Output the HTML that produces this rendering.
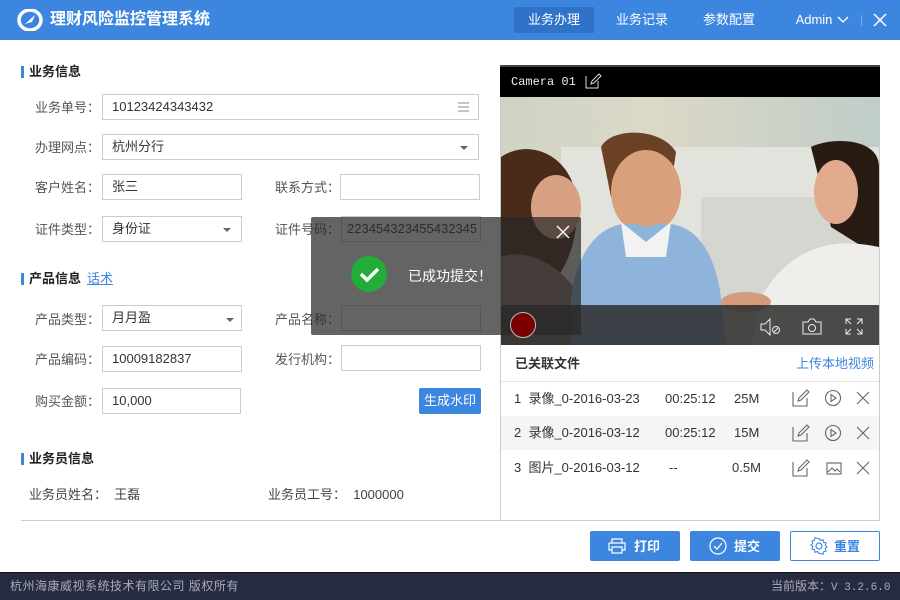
<!DOCTYPE html>
<html><head><meta charset="utf-8">
<style>
*{margin:0;padding:0;box-sizing:border-box}
body{width:900px;height:600px;overflow:hidden;background:#fff;font-family:"Liberation Sans","Noto Sans CJK SC",sans-serif;font-size:13px;line-height:16px;color:#333;position:relative}
.a{position:absolute;white-space:nowrap}
.top{left:0;top:0;width:900px;height:40px;background:#3d86e0}
.title{left:50px;top:11px;color:#fff;font-size:16px;line-height:18px;font-weight:bold}
.nav{top:7px;height:26px;line-height:26px;color:#fff;font-size:13px;text-align:center}
.sec{font-weight:bold;font-size:13px;color:#222}
.bar{width:3px;height:12px;background:#3d86e0}
.lab{color:#555;font-size:13px;text-align:right;width:82px}
.inp{border:1px solid #ccc;height:26px;line-height:24px;padding-left:9px;font-size:13px;color:#333;background:#fff}
.caret{width:0;height:0;border-left:4px solid transparent;border-right:4px solid transparent;border-top:4px solid #666}
.btn{height:30px;line-height:30px;color:#fff;background:#3d86e0;border-radius:2px;font-weight:bold;font-size:13px}
.row{left:501px;width:378px;height:34px;line-height:34px;font-size:13px;color:#333}
</style></head><body>
<div class="a top"></div>
<svg class="a" style="left:17px;top:9px" width="26" height="22" viewBox="0 0 26 22"><ellipse cx="13" cy="11" rx="11" ry="10" fill="none" stroke="#fff" stroke-width="3.5"/><path d="M8 15 L18 6 L15 13 Z" fill="#fff"/></svg>
<div class="a title">理财风险监控管理系统</div>
<div class="a nav" style="left:514px;width:80px;background:#2f72c8">业务办理</div>
<div class="a nav" style="left:602px;width:80px">业务记录</div>
<div class="a nav" style="left:689px;width:80px">参数配置</div>
<div class="a nav" style="left:790px;width:48px">Admin</div>
<svg class="a" style="left:837px;top:16px" width="12" height="8"><path d="M1 1 L6 6 L11 1" stroke="#fff" fill="none" stroke-width="1.3"/></svg>
<div class="a" style="left:861px;top:15px;width:1px;height:11px;background:#7aaae8"></div>
<svg class="a" style="left:873px;top:13px" width="14" height="14"><path d="M1 1 L13 13 M13 1 L1 13" stroke="#fff" stroke-width="1.5"/></svg>

<div class="a bar" style="left:21px;top:66px"></div>
<div class="a sec" style="left:29px;top:64px">业务信息</div>
<div class="a lab" style="left:18px;top:100px">业务单号：</div>
<div class="a inp" style="left:102px;top:94px;width:377px">10123424343432</div>
<svg class="a" style="left:458px;top:102px" width="11" height="10"><path d="M0 1h11M0 5h11M0 9h11" stroke="#888" stroke-width="1"/></svg>
<div class="a lab" style="left:18px;top:140px">办理网点：</div>
<div class="a inp" style="left:102px;top:134px;width:377px">杭州分行</div>
<div class="a caret" style="left:460px;top:146px"></div>
<div class="a lab" style="left:18px;top:180px">客户姓名：</div>
<div class="a inp" style="left:102px;top:174px;width:140px">张三</div>
<div class="a lab" style="left:258px;top:180px">联系方式：</div>
<div class="a inp" style="left:340px;top:174px;width:140px"></div>
<div class="a lab" style="left:18px;top:222px">证件类型：</div>
<div class="a inp" style="left:102px;top:216px;width:140px">身份证</div>
<div class="a caret" style="left:223px;top:228px"></div>
<div class="a lab" style="left:258px;top:222px">证件号码：</div>
<div class="a inp" style="left:341px;top:216px;width:140px;padding-left:5px">223454323455432345</div>

<div class="a bar" style="left:21px;top:273px"></div>
<div class="a sec" style="left:29px;top:271px">产品信息</div>
<div class="a" style="left:87px;top:271px;color:#3d86e0;text-decoration:underline">话术</div>
<div class="a lab" style="left:18px;top:312px">产品类型：</div>
<div class="a inp" style="left:102px;top:305px;width:140px">月月盈</div>
<div class="a caret" style="left:226px;top:318px"></div>
<div class="a lab" style="left:258px;top:312px">产品名称：</div>
<div class="a inp" style="left:341px;top:305px;width:140px"></div>
<div class="a lab" style="left:18px;top:352px">产品编码：</div>
<div class="a inp" style="left:102px;top:346px;width:140px">10009182837</div>
<div class="a lab" style="left:258px;top:352px">发行机构：</div>
<div class="a inp" style="left:341px;top:345px;width:140px"></div>
<div class="a lab" style="left:18px;top:394px">购买金额：</div>
<div class="a inp" style="left:102px;top:388px;width:139px">10,000</div>
<div class="a btn" style="left:419px;top:388px;width:62px;height:26px;line-height:26px;text-align:center;font-weight:normal">生成水印</div>

<div class="a bar" style="left:21px;top:453px"></div>
<div class="a sec" style="left:29px;top:451px">业务员信息</div>
<div class="a" style="left:29px;top:487px;color:#444">业务员姓名：&nbsp;&nbsp;王磊</div>
<div class="a" style="left:268px;top:487px;color:#444">业务员工号：&nbsp;&nbsp;1000000</div>
<div class="a" style="left:21px;top:520px;width:480px;height:1px;background:#ccc"></div>

<div class="a" style="left:500px;top:65px;width:380px;height:456px;border:1px solid #ccc"></div>
<div class="a" style="left:500px;top:65px;width:380px;height:32px;background:#000;border-top:2px solid #444"></div>
<div class="a" style="left:511px;top:74px;color:#eee;font-family:'Liberation Mono',monospace;font-size:12px">Camera 01</div>
<svg class="a" style="left:585px;top:73px" width="18" height="16"><path d="M1 3v12h12V8" stroke="#ddd" fill="none"/><path d="M6 11l1-3 7-7 2 2-7 7z" stroke="#ddd" fill="none"/></svg>
<svg class="a" style="left:501px;top:97px" width="378" height="248" viewBox="0 0 378 248">
<defs><linearGradient id="bg" x1="0" x2="1"><stop offset="0" stop-color="#cfd3c5"/><stop offset=".4" stop-color="#dcd8c6"/><stop offset="1" stop-color="#bfcdc8"/></linearGradient></defs>
<rect width="378" height="248" fill="url(#bg)"/>
<rect x="60" y="50" width="318" height="160" fill="#e2e3dc"/>
<rect x="200" y="100" width="178" height="120" fill="#d4d6d0"/>
<path d="M0 60 C30 40 70 60 75 100 C80 150 60 180 40 200 L0 210Z" fill="#4a2a18"/>
<ellipse cx="55" cy="110" rx="25" ry="32" fill="#d9a183"/>
<path d="M0 160 C30 150 60 170 80 200 L80 248 L0 248Z" fill="#8a7060"/>
<path d="M100 50 C110 30 160 30 175 55 L170 90 L110 100Z" fill="#6b4126"/>
<ellipse cx="145" cy="95" rx="35" ry="42" fill="#d9a07c"/>
<path d="M70 200 C80 130 120 120 145 130 C175 120 210 130 220 200 L225 248 L70 248Z" fill="#8eb4dc"/>
<path d="M120 125 L145 145 L170 125 L165 160 L125 160Z" fill="#f2f2f2"/>
<path d="M310 50 C330 40 378 40 378 70 L378 160 L330 130Z" fill="#2a1a14"/>
<ellipse cx="335" cy="95" rx="22" ry="32" fill="#e0ab8e"/>
<path d="M260 200 C290 150 330 140 378 150 L378 248 L250 248Z" fill="#efeeea"/>
<ellipse cx="245" cy="205" rx="25" ry="10" fill="#d49a7c"/>
<rect y="208" width="378" height="40" fill="#2d2d2d" opacity=".85"/>
</svg>
<svg class="a" style="left:759px;top:318px" width="22" height="18"><path d="M2 6h4l5-5v16l-5-5H2z" stroke="#eee" fill="none"/><circle cx="17" cy="12" r="3.5" stroke="#eee" fill="none"/><path d="M15 14l4-4" stroke="#eee"/></svg>
<svg class="a" style="left:802px;top:318px" width="20" height="17"><path d="M1 4h5l2-3h4l2 3h5v12H1z" stroke="#eee" fill="none"/><circle cx="10" cy="10" r="3.5" stroke="#eee" fill="none"/></svg>
<svg class="a" style="left:845px;top:318px" width="18" height="17"><path d="M1 6V1h5M12 1h5v5M17 11v5h-5M6 16H1v-5M1 1l5 5M17 1l-5 5M17 16l-5-5M1 16l5-5" stroke="#eee" fill="none"/></svg>

<div class="a" style="left:515px;top:356px;font-weight:bold;color:#333">已关联文件</div>
<div class="a" style="left:796px;top:356px;color:#3d86e0">上传本地视频</div>
<div class="a" style="left:501px;top:381px;width:378px;height:1px;background:#e6e6e6"></div>
<div class="a row" style="top:382px"><span class="a" style="left:13px">1&nbsp; 录像_0-2016-03-23</span><span class="a" style="left:164px">00:25:12</span><span class="a" style="left:233px">25M</span></div>
<div class="a row" style="top:416px;background:#f5f5f5"><span class="a" style="left:13px">2&nbsp; 录像_0-2016-03-12</span><span class="a" style="left:164px">00:25:12</span><span class="a" style="left:233px">15M</span></div>
<div class="a row" style="top:451px"><span class="a" style="left:13px">3&nbsp; 图片_0-2016-03-12</span><span class="a" style="left:168px">--</span><span class="a" style="left:231px">0.5M</span></div>
<svg class="a" style="left:790px;top:388px" width="90" height="100">
<g stroke="#666" fill="none" stroke-width="1.1">
<path d="M3 4v14h14V10M8 13l1-3 8-8 2 2-8 8z"/>
<circle cx="43" cy="10" r="7.5"/><path d="M41 6.5v7l5-3.5z"/>
<path d="M67 4l12 12M79 4L67 16"/>
<g transform="translate(0,35)"><path d="M3 4v14h14V10M8 13l1-3 8-8 2 2-8 8z"/><circle cx="43" cy="10" r="7.5"/><path d="M41 6.5v7l5-3.5z"/><path d="M67 4l12 12M79 4L67 16"/></g>
<g transform="translate(0,70)"><path d="M3 4v14h14V10M8 13l1-3 8-8 2 2-8 8z"/><rect x="37" y="5" width="14" height="11"/><path d="M38 14l4-4 3 3 2-2 3 3"/><path d="M67 4l12 12M79 4L67 16"/></g>
</g></svg>

<div class="a" style="left:311px;top:217px;width:270px;height:118px;background:rgba(40,40,40,.72);border-radius:2px"></div>
<svg class="a" style="left:556px;top:225px" width="14" height="14"><path d="M1 1l12 12M13 1L1 13" stroke="#fff" stroke-width="1.4"/></svg>
<div class="a" style="left:351px;top:256px;width:36px;height:36px;border-radius:50%;background:#22ac38"></div>
<svg class="a" style="left:351px;top:256px" width="36" height="36"><path d="M10 18l6 6 11-11" stroke="#fff" stroke-width="3.5" fill="none"/></svg>
<div class="a" style="left:408px;top:268px;color:#fff;font-size:14px">已成功提交！</div>
<div class="a" style="left:510px;top:312px;width:26px;height:26px;border-radius:50%;background:#7a0000;border:1px solid #bbb"></div>

<div class="a btn" style="left:590px;top:531px;width:90px"></div>
<svg class="a" style="left:608px;top:538px" width="18" height="16"><path d="M4 5V1h10v4M1 5h16v7h-3M4 12H1V5M4 9h10v6H4z" stroke="#fff" fill="none" stroke-width="1.2"/></svg>
<div class="a" style="left:634px;top:539px;color:#fff;font-weight:bold">打印</div>
<div class="a btn" style="left:690px;top:531px;width:90px"></div>
<svg class="a" style="left:709px;top:537px" width="18" height="18"><circle cx="9" cy="9" r="8" stroke="#fff" fill="none" stroke-width="1.2"/><path d="M5 9l3 3 5-6" stroke="#fff" fill="none" stroke-width="1.3"/></svg>
<div class="a" style="left:734px;top:539px;color:#fff;font-weight:bold">提交</div>
<div class="a" style="left:790px;top:531px;width:90px;height:30px;border:1px solid #3d86e0;border-radius:2px"></div>
<svg class="a" style="left:810px;top:537px" width="18" height="18"><circle cx="9" cy="9" r="3" stroke="#3d86e0" fill="none" stroke-width="1.2"/><path d="M9 1.5l1.5 2 2.5-.8.5 2.5 2.5.8-.8 2.5 1.8 1.5-1.8 1.5.8 2.5-2.5.8-.5 2.5-2.5-.8L9 16.5 7.5 14.5l-2.5.8-.5-2.5L2 12l.8-2.5L1 8l1.8-1.5L2 4l2.5-.8.5-2.5 2.5.8z" stroke="#3d86e0" fill="none" stroke-width="1.1"/></svg>
<div class="a" style="left:834px;top:539px;color:#3d86e0;font-weight:bold">重置</div>

<div class="a" style="left:0;top:572px;width:900px;height:28px;background:#262b40;border-top:1px solid #111"></div>
<div class="a" style="left:10px;top:578px;color:#aab;font-size:12px;letter-spacing:.5px">杭州海康威视系统技术有限公司 版权所有</div>
<div class="a" style="left:771px;top:578px;color:#aab;font-size:12px">当前版本：<span style="font-family:'Liberation Mono',monospace;font-size:11px">V 3.2.6.0</span></div>
</body></html>
